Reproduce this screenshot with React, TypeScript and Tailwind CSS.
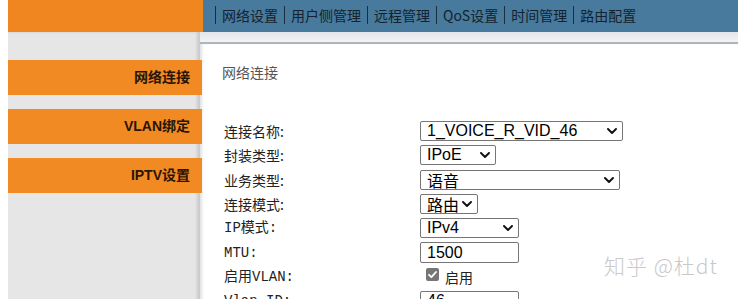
import type { FC, ReactNode } from "react";

const cjk = "font-['Noto_Sans_CJK_SC','Liberation_Sans',sans-serif]";
const arial = "font-['Liberation_Sans','Noto_Sans_CJK_SC',sans-serif]";
const mono = "font-['Liberation_Mono','Noto_Sans_CJK_SC',monospace]";

const navItems = ["网络设置", "用户侧管理", "远程管理", "QoS设置", "时间管理", "路由配置"];
const sideItems = ["网络连接", "VLAN绑定", "IPTV设置"];

const Chevron: FC = () => (
  <svg
    width="10"
    height="6"
    viewBox="0 0 10 6"
    className="pointer-events-none absolute right-[5px] top-1/2 -translate-y-1/2"
  >
    <path
      d="M1 1l4 4 4-4"
      fill="none"
      stroke="#111"
      strokeWidth="1.9"
      strokeLinecap="round"
      strokeLinejoin="round"
    />
  </svg>
);

// fake native <select>, so the chevron looks the same everywhere
const Select: FC<{ className: string; children: ReactNode; font?: string }> = ({
  className,
  children,
  font = arial,
}) => (
  <div
    className={`relative flex h-[20px] items-center rounded-[2px] border border-[#767676] bg-white pl-[6px] text-[16px] leading-none text-black ${font} ${className}`}
  >
    {children}
    <Chevron />
  </div>
);

const Input: FC<{ value: string }> = ({ value }) => (
  <div
    className={`flex h-[21px] w-[99px] items-center rounded-[2px] border border-[#767676] bg-white pl-[6px] text-[16px] leading-none text-black ${arial}`}
  >
    {value}
  </div>
);

const Row: FC<{ label: string; labelFont?: string; children: ReactNode }> = ({
  label,
  labelFont = cjk,
  children,
}) => (
  <div className="flex h-[24.3px] items-center">
    <div className={`w-[196px] text-[14px] leading-none text-[#222] ${labelFont}`}>{label}</div>
    {children}
  </div>
);

export default function App() {
  return (
    <div className="relative flex h-[299px] w-[738px] flex-col overflow-hidden bg-white pl-2">
      {/* top bar */}
      <div className="flex h-[32px] shrink-0">
        <div className="w-[195px] bg-[#f0861f]" />
        <div className={`flex flex-1 items-start bg-[#477a9c] pl-[12px] pt-[6px] ${cjk}`}>
          {navItems.map((n) => (
            <div
              key={n}
              className="flex h-[18px] items-center border-l border-[#1d2d3c] px-[6px] text-[14px] leading-none text-[#15222e]"
            >
              {n}
            </div>
          ))}
        </div>
      </div>

      <div className="flex flex-1">
        {/* sidebar */}
        <div className="relative z-10 flex w-[192px] shrink-0 flex-col gap-[14px] bg-[#e6e6e6] pt-[28px] shadow-[inset_-3px_0_3px_rgba(0,0,0,0.12)]">
          {sideItems.map((s) => (
            <div
              key={s}
              className={`flex h-[35px] w-[194px] items-center justify-end bg-[#f18a22] pr-[12px] text-[14px] font-bold text-[#2a1405] ${arial}`}
            >
              {s}
            </div>
          ))}
        </div>

        {/* main */}
        <div className="flex flex-1 flex-col">
          <div className="h-[12px] shrink-0 border-b-2 border-[#aeb4ba] bg-gradient-to-b from-[#e2e5e9] to-[#f3f4f6]" />
          <div className="flex-1 bg-white pl-[22px] pt-[18px] shadow-[inset_3px_0_3px_-1px_rgba(0,0,0,0.12)]">
            <div className={`h-[20px] text-[14px] leading-[20px] text-[#555] ${cjk}`}>网络连接</div>

            <div className="mt-[37px] pl-[2px]">
              <Row label="连接名称:">
                <Select className="w-[203px]">1_VOICE_R_VID_46</Select>
              </Row>
              <Row label="封装类型:">
                <Select className="w-[76px]">IPoE</Select>
              </Row>
              <Row label="业务类型:">
                <Select className="w-[200px]" font={cjk}>
                  语音
                </Select>
              </Row>
              <Row label="连接模式:">
                <Select className="w-[58px]" font={cjk}>
                  路由
                </Select>
              </Row>
              <Row label="IP模式:" labelFont={mono}>
                <Select className="w-[99px]">IPv4</Select>
              </Row>
              <Row label="MTU:" labelFont={mono}>
                <Input value="1500" />
              </Row>
              <Row label="启用VLAN:" labelFont={mono}>
                <div className={`ml-[6px] flex items-center gap-[6px] text-[14px] leading-none text-[#222] ${cjk}`}>
                  <span className="-mt-[4px] flex h-[13px] w-[13px] items-center justify-center rounded-[2px] bg-[#767676]">
                    <svg width="11" height="11" viewBox="0 0 11 11">
                      <path
                        d="M2 5.8l2.4 2.4L9 3"
                        fill="none"
                        stroke="#fff"
                        strokeWidth="1.8"
                        strokeLinecap="round"
                        strokeLinejoin="round"
                      />
                    </svg>
                  </span>
                  启用
                </div>
              </Row>
              <Row label="Vlan ID:" labelFont={mono}>
                <Input value="46" />
              </Row>
            </div>
          </div>
        </div>
      </div>

      {/* watermark */}
      <div
        className={`absolute left-[604px] top-[255px] text-[21px] font-light leading-none tracking-[1px] text-[#c9c9c9] [text-shadow:0_0_1px_#fff] ${cjk}`}
      >
        知乎 @杜dt
      </div>
    </div>
  );
}
